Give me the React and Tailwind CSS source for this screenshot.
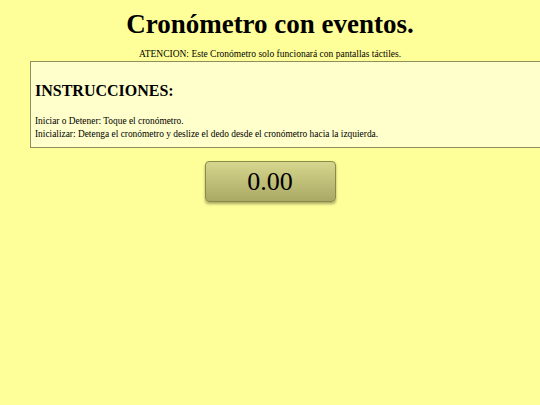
export default function App() {
  return (
    <div className="min-h-[405px] bg-[#ffff99] text-black" style={{ fontFamily: '"Liberation Serif", serif' }}>
      <h1 className="pt-[7px] text-center text-[27px] font-bold leading-[34px]">Cronómetro con eventos.</h1>
      <p className="mt-[7px] text-center text-[9.5px] leading-[12px]">
        ATENCION: Este Cronómetro solo funcionará con pantallas táctiles.
      </p>
      <div className="ml-[30px] mt-[1px] w-[530px] border border-[#8f8f5c] bg-[#ffffcc] px-[4px] pb-[6px] pt-[19px]">
        <h2 className="text-[16px] font-bold leading-[20px]">INSTRUCCIONES:</h2>
        <p className="mt-[14px] text-[9.4px] leading-[13px]">Iniciar o Detener: Toque el cronómetro.</p>
        <p className="text-[9.4px] leading-[13px]">
          Inicializar: Detenga el cronómetro y deslize el dedo desde el cronómetro hacia la izquierda.
        </p>
      </div>
      <div className="mt-[13px] flex justify-center">
        <div className="flex h-[41px] w-[131px] items-center justify-center rounded-[4px] border border-[#8a8a4a] bg-gradient-to-b from-[#d6d68e] to-[#a9a964] text-[26px] shadow-[0_2px_3px_rgba(0,0,0,0.35)]">
          0.00
        </div>
      </div>
    </div>
  );
}
